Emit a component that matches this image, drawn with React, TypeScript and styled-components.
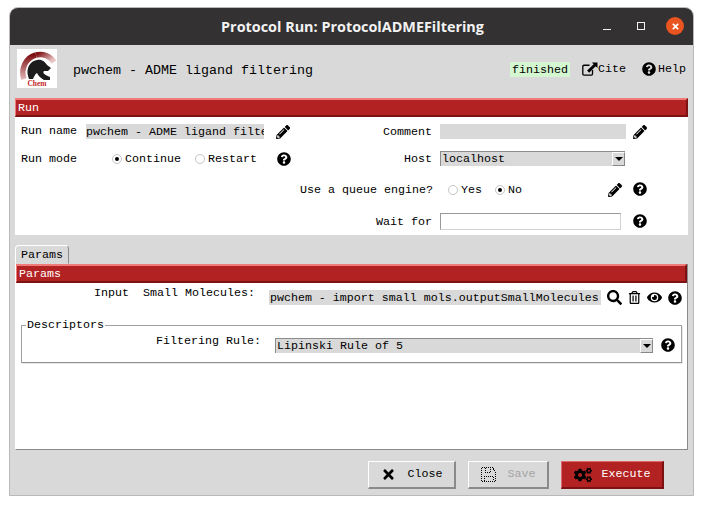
import React from 'react';
import styled, { createGlobalStyle } from 'styled-components';
import { FaCogs, FaEye, FaPencilAlt, FaQuestionCircle, FaRegTrashAlt, FaSearch, FaTimes } from 'react-icons/fa';

const GlobalStyle = createGlobalStyle`
  html, body {
    margin: 0;
    padding: 0;
    background: #fff;
  }
`;

const Logo = () => (
  <svg width="40" height="39" viewBox="0 0 40 39">
    <defs>
      <linearGradient id="arcLeft" x1="0" y1="0" x2="0" y2="1">
        <stop offset="0" stopColor="#7d0f12" />
        <stop offset="1" stopColor="#e4b5b5" />
      </linearGradient>
      <linearGradient id="arcRight" x1="0" y1="0" x2="1" y2="0.6">
        <stop offset="0" stopColor="#7d0f12" />
        <stop offset="1" stopColor="#e8c4c4" />
      </linearGradient>
    </defs>
    <rect width="40" height="39" fill="#fff" />
    <path d="M7 30 A17 18 0 0 1 19 6" fill="none" stroke="url(#arcLeft)" strokeWidth="5.5" />
    <path d="M19 6 A17 18 0 0 1 37 13" fill="none" stroke="url(#arcRight)" strokeWidth="5.5" />
    <path
      d="M11 27 C9 19 13 12 20 11 C25 10 28 13 30 16 L34 19 L31 22 L27 22 C25 24 28 26 33 28 L33 31 L27 31 C23 29 21 26 20 24 C18 25 17 28 16 30 L12 30 Z"
      fill="#1c1c1c"
    />
    <text x="20" y="37" textAnchor="middle" fontFamily="'Liberation Serif', serif" fontWeight="700" fontSize="7.5" fill="#c4262a">
      Chem
    </text>
  </svg>
);

const CiteIcon = () => (
  <svg width="16" height="14" viewBox="0 0 17 15">
    <path d="M8 3.5 H2 Q0.8 3.5 0.8 4.7 V12.8 Q0.8 14 2 14 H10 Q11.2 14 11.2 12.8 V8.5" fill="none" stroke="#000" strokeWidth="1.4" />
    <path d="M10.5 0.5 H16.5 V6.5 L14.6 4.6 L7.6 11.4 L5.4 9.2 L12.4 2.4 Z" fill="#000" />
  </svg>
);

const SaveIcon = () => (
  <svg width="15" height="15" viewBox="0 0 15 15" shapeRendering="crispEdges">
    <path
      d="M0.5 0.5 H11 L14.5 4 V14.5 H0.5 Z M4 1 V5 H9.5 V1 M3 14 V9.5 H12 V14"
      fill="none"
      stroke="#000"
      strokeDasharray="1 1"
    />
  </svg>
);

const App = () => {
  return (
    <>
      <GlobalStyle />
      <Win>
        <TitleBar>
          <TitleText>Protocol Run: ProtocolADMEFiltering</TitleText>
          <WinControls>
            <MinGlyph />
            <MaxGlyph />
            <CloseGlyph>
              <FaTimes size={9} />
            </CloseGlyph>
          </WinControls>
        </TitleBar>

        <Content>
          <Header>
            <LogoBox>
              <Logo />
            </LogoBox>
            <Heading>pwchem - ADME ligand filtering</Heading>
            <Status>finished</Status>
            <HeaderLink $left={12}>
              <CiteIcon />
              Cite
            </HeaderLink>
            <HeaderLink $left={14} $gap={2}>
              <FaQuestionCircle size={14} />
              Help
            </HeaderLink>
          </Header>

          <RedBar>Run</RedBar>
          <RunForm>
            <LeftCell>
              <RowLabel $width={65} $up>
                Run name
              </RowLabel>
              <TextValue $width={178}>pwchem - ADME ligand filtering</TextValue>
              <IconSlot $left={11}>
                <FaPencilAlt size={14} />
              </IconSlot>
            </LeftCell>
            <FieldLabel>Comment</FieldLabel>
            <TextValue $width={186} />
            <IconSlot>
              <FaPencilAlt size={14} />
            </IconSlot>

            <LeftCell>
              <RowLabel $width={91}>Run mode</RowLabel>
              <Radio checked label="Continue" />
              <RadioSpacer />
              <Radio label="Restart" />
              <IconSlot $left={19}>
                <FaQuestionCircle size={14} />
              </IconSlot>
            </LeftCell>
            <FieldLabel>Host</FieldLabel>
            <Dropdown $width={185}>
              <DropdownText>localhost</DropdownText>
              <DropdownArrow />
            </Dropdown>
            <span />

            <WideLabel>Use a queue engine?</WideLabel>
            <QueueCell>
              <QueueRadios>
                <Radio label="Yes" />
                <Radio checked label="No" />
              </QueueRadios>
              <FaPencilAlt size={14} />
            </QueueCell>
            <IconSlot>
              <FaQuestionCircle size={14} />
            </IconSlot>

            <span />
            <FieldLabel $down>Wait for</FieldLabel>
            <WaitInput />
            <IconSlot>
              <FaQuestionCircle size={14} />
            </IconSlot>
          </RunForm>

          <TabStrip>
            <Tab>Params</Tab>
          </TabStrip>
          <ParamsPanel>
            <RedBar>Params</RedBar>
            <InputRow>
              <span>Input</span>
              <InputName>Small Molecules:</InputName>
              <PointerValue>pwchem - import small mols.outputSmallMolecules</PointerValue>
              <PointerIcons>
                <FaSearch size={15} />
                <FaRegTrashAlt size={13} />
                <FaEye size={15} />
                <FaQuestionCircle size={14} />
              </PointerIcons>
            </InputRow>
            <Group>
              <GroupTitle>Descriptors</GroupTitle>
              <GroupRow>
                <RuleLabel>Filtering Rule:</RuleLabel>
                <Dropdown $width={378}>
                  <DropdownText>Lipinski Rule of 5</DropdownText>
                  <DropdownArrow />
                </Dropdown>
                <RuleHelp>
                  <FaQuestionCircle size={14} />
                </RuleHelp>
              </GroupRow>
            </Group>
          </ParamsPanel>

          <Footer>
            <ActionButton $width={88} $gap={12}>
              <FaTimes size={15} />
              Close
            </ActionButton>
            <ActionButton $width={81} $gap={12} $disabled>
              <SaveIcon />
              Save
            </ActionButton>
            <ActionButton $width={103} $gap={10} $primary>
              <CogsIcon />
              Execute
            </ActionButton>
          </Footer>
        </Content>
      </Win>
    </>
  );
};

const Radio = ({ checked, label }: { checked?: boolean; label: string }) => (
  <RadioWrap>
    <RadioDot $checked={checked} />
    {label}
  </RadioWrap>
);

export default App;

const mono = `'Liberation Mono', 'DejaVu Sans Mono', monospace`;

const Win = styled.div`
  width: 683px;
  height: 487px;
  margin: 7px 0 0 9px;
  border: 1px solid #b9b9b9;
  border-radius: 9px 9px 0 0;
  overflow: hidden;
  background: #d9d9d9;
  display: flex;
  flex-direction: column;
  font-family: ${mono};
  font-size: 11.67px;
  color: #000;
`;

const TitleBar = styled.div`
  height: 37px;
  flex: none;
  background: #333132;
  display: flex;
  align-items: center;
  justify-content: center;
  position: relative;
`;

const TitleText = styled.div`
  font-family: 'Open Sans', 'Noto Sans', sans-serif;
  font-size: 14.4px;
  font-weight: 700;
  color: #f2f2f2;
  margin-left: 2px;
`;

const WinControls = styled.div`
  position: absolute;
  right: 9px;
  top: 9px;
  display: flex;
  align-items: center;
  gap: 26px;
`;

const MinGlyph = styled.div`
  width: 8px;
  height: 1px;
  margin-top: 7px;
  background: #f2f2f2;
`;

const MaxGlyph = styled.div`
  width: 6px;
  height: 6px;
  border: 1px solid #f2f2f2;
`;

const CloseGlyph = styled.div`
  width: 18px;
  height: 18px;
  margin-left: -5px;
  border-radius: 50%;
  background: #e95420;
  color: #fff;
  display: flex;
  align-items: center;
  justify-content: center;
`;

const Content = styled.div`
  flex: 1;
  padding: 0 5px;
  display: flex;
  flex-direction: column;
`;

const Header = styled.div`
  height: 53px;
  flex: none;
  display: flex;
  align-items: center;
`;

const LogoBox = styled.div`
  width: 40px;
  height: 39px;
  margin-left: 2px;
  margin-top: -6px;
`;

const Heading = styled.div`
  font-size: 13.33px;
  margin-left: 16px;
  margin-top: -3px;
  flex: 1;
`;

const Status = styled.div`
  width: 60px;
  height: 15px;
  margin-top: -5px;
  line-height: 16px;
  text-align: center;
  background: #d4f6d0;
`;

const HeaderLink = styled.div<{ $left: number; $gap?: number }>`
  display: flex;
  align-items: center;
  gap: ${(p) => p.$gap ?? 0}px;
  margin-left: ${(p) => p.$left}px;
  margin-top: -6px;
  margin-right: 2px;
`;

const RedBar = styled.div`
  height: 19px;
  flex: none;
  box-sizing: border-box;
  border: 2px solid;
  border-color: #ee7a7a #7d1212 #7d1212 #ee7a7a;
  border-left-width: 1px;
  background: #b22222;
  color: #fff;
  line-height: 17px;
  padding-left: 2px;
`;

const RunForm = styled.div`
  height: 118px;
  flex: none;
  box-sizing: border-box;
  background: #fff;
  padding: 7px 0 5px 6px;
  display: grid;
  grid-template-columns: 279px 140px 186px 28px;
  grid-template-rows: 15px 15px 22px 18px;
  row-gap: 12px;
  align-items: center;
`;

const LeftCell = styled.div`
  display: flex;
  align-items: center;
  white-space: nowrap;
`;

const RowLabel = styled.div<{ $width: number; $up?: boolean }>`
  width: ${(p) => p.$width}px;
  flex: none;
  margin-top: ${(p) => (p.$up ? -2 : 0)}px;
`;

const FieldLabel = styled.div<{ $down?: boolean }>`
  text-align: right;
  padding-right: 8px;
  padding-top: ${(p) => (p.$down ? 2 : 0)}px;
`;

const WideLabel = styled.div`
  grid-column: 1 / 3;
  text-align: right;
  padding: 1px 7px 0 0;
`;

const TextValue = styled.div<{ $width: number }>`
  width: ${(p) => p.$width}px;
  height: 15px;
  flex: none;
  line-height: 17px;
  background: #d9d9d9;
  overflow: hidden;
  white-space: nowrap;
`;

const IconSlot = styled.div<{ $left?: number }>`
  width: ${(p) => (p.$left ? '16px' : '100%')};
  margin-left: ${(p) => p.$left ?? 0}px;
  display: flex;
  justify-content: center;
`;

const RadioWrap = styled.div`
  display: flex;
  align-items: center;
  gap: 3px;
`;

const RadioDot = styled.div<{ $checked?: boolean }>`
  width: 10px;
  height: 10px;
  box-sizing: border-box;
  border-radius: 50%;
  border: 1px solid #c4c4c4;
  background: #fff;
  display: flex;
  align-items: center;
  justify-content: center;
  &::after {
    content: '';
    width: 4px;
    height: 4px;
    border-radius: 50%;
    background: ${(p) => (p.$checked ? '#000' : 'transparent')};
  }
`;

const RadioSpacer = styled.div`
  width: 14px;
`;

const QueueCell = styled.div`
  display: flex;
  align-items: center;
  justify-content: space-between;
  padding: 1px 4px 0 8px;
`;

const QueueRadios = styled.div`
  display: flex;
  gap: 13px;
`;

const WaitInput = styled.div`
  width: 181px;
  height: 17px;
  box-sizing: border-box;
  align-self: end;
  background: #fff;
  border: 1px solid #d2d2d2;
  border-top-color: #999;
  border-left-color: #999;
`;

const Dropdown = styled.div<{ $width: number }>`
  width: ${(p) => p.$width}px;
  height: 15px;
  flex: none;
  box-sizing: border-box;
  background: #d9d9d9;
  border-top: 1px solid #8c8c8c;
  border-left: 1px solid #8c8c8c;
  display: flex;
  align-items: stretch;
`;

const DropdownText = styled.div`
  flex: 1;
  padding-left: 1px;
  line-height: 15px;
  white-space: nowrap;
`;

const DropdownArrow = styled.div`
  width: 13px;
  flex: none;
  box-sizing: border-box;
  border: 1px solid;
  border-color: #fff #888 #888 #fff;
  display: flex;
  align-items: center;
  justify-content: center;
  &::after {
    content: '';
    border-left: 4px solid transparent;
    border-right: 4px solid transparent;
    border-top: 4px solid #000;
  }
`;

const TabStrip = styled.div`
  margin-top: 10px;
  height: 19px;
  flex: none;
  display: flex;
`;

const Tab = styled.div`
  width: 54px;
  box-sizing: border-box;
  border: 1px solid;
  border-color: #fff #8a8a8a transparent #fff;
  border-radius: 4px 4px 0 0;
  text-align: center;
  line-height: 18px;
`;

const ParamsPanel = styled.div`
  height: 186px;
  flex: none;
  box-sizing: border-box;
  background: #fff;
  border-style: solid;
  border-width: 0 1px 1px 1px;
  border-color: #fff #8a8a8a #8a8a8a #fff;
  display: flex;
  flex-direction: column;
`;

const InputRow = styled.div`
  display: flex;
  align-items: flex-start;
  padding: 3px 0 0 78px;
  height: 19px;
  box-sizing: border-box;
  flex: none;
  line-height: 14px;
`;

const InputName = styled.span`
  margin-left: 14px;
`;

const PointerValue = styled.div`
  width: 332px;
  height: 15px;
  box-sizing: border-box;
  margin: 4px 0 0 14px;
  padding-left: 1px;
  line-height: 17px;
  background: #d9d9d9;
  white-space: nowrap;
  overflow: hidden;
`;

const PointerIcons = styled.div`
  display: grid;
  grid-template-columns: repeat(4, 20px);
  justify-items: center;
  align-items: center;
  margin: 4px 0 0 4px;
  height: 15px;
`;

const Group = styled.fieldset`
  margin: 16px 5px 0 5px;
  padding: 6px 0 0;
  height: 45px;
  box-sizing: border-box;
  border: 1px solid #a0a0a0;
  border-bottom-color: #8f8f8f;
  box-shadow: inset -1px -1px 0 #fff, 1px 1px 0 #e8e8e8;
`;

const GroupTitle = styled.legend`
  margin-left: 4px;
  padding: 0 1px;
  line-height: 14px;
`;

const GroupRow = styled.div`
  display: flex;
  align-items: flex-start;
  padding-left: 134px;
  line-height: 14px;
`;

const RuleLabel = styled.div`
  width: 119px;
  flex: none;
  margin-top: -4px;
`;

const RuleHelp = styled.div`
  margin-left: 8px;
`;

const Footer = styled.div`
  display: flex;
  justify-content: flex-end;
  gap: 12px;
  margin-top: 11px;
  padding-right: 24px;
`;

const ActionButton = styled.div<{ $width: number; $gap: number; $primary?: boolean; $disabled?: boolean }>`
  width: ${(p) => p.$width}px;
  height: 28px;
  box-sizing: border-box;
  border: 1px solid;
  border-width: 1px 2px 2px 1px;
  border-color: ${(p) => (p.$primary ? '#e06a6a #7d1212 #7d1212 #e06a6a' : '#fff #8a8a8a #8a8a8a #fff')};
  background: ${(p) => (p.$primary ? '#b22222' : '#d9d9d9')};
  color: ${(p) => (p.$primary ? '#fff' : p.$disabled ? '#a3a3a3' : '#000')};
  display: flex;
  align-items: center;
  justify-content: center;
  gap: ${(p) => p.$gap}px;
  line-height: 15px;
  & > svg {
    color: #000;
    flex: none;
  }
`;

const CogsIcon = styled(FaCogs).attrs({ size: 18 })``;
